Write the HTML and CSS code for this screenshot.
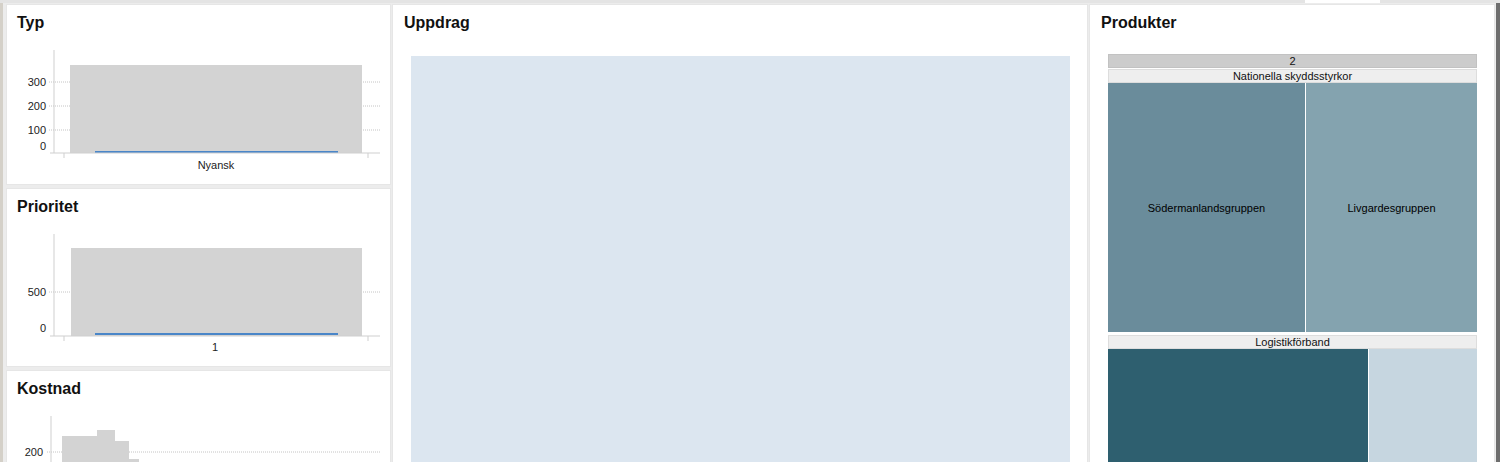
FILE: index.html
```html
<!DOCTYPE html>
<html lang="sv">
<head>
  <meta charset="UTF-8">
  <meta name="viewport" content="width=device-width, initial-scale=1">
  <title>Uppdrag – översikt</title>
  <link rel="stylesheet" href="styles.css">
</head>
<body>

  <div class="tabstrip"><span class="tab-active"></span></div>

  <div class="app">
    <!-- Left column: small charts -->
    <div class="col-left">
      <section class="panel panel-typ">
        <h2 class="panel-title">Typ</h2>
        <svg class="chart" width="383" height="150" viewBox="0 0 383 150">
          <line class="grid" x1="42" y1="49" x2="373" y2="49"/>
          <line class="grid" x1="42" y1="73" x2="373" y2="73"/>
          <line class="grid" x1="42" y1="97" x2="373" y2="97"/>
          <rect class="bar" x="63" y="32" width="292" height="88"/>
          <line class="value" x1="88" y1="119" x2="331" y2="119"/>
          <line class="axis" x1="47" y1="17" x2="47" y2="120"/>
          <line class="axis" x1="43" y1="120" x2="373" y2="120"/>
          <line class="axis" x1="57" y1="120" x2="57" y2="125"/>
          <line class="axis" x1="361" y1="120" x2="361" y2="125"/>
          <text class="tick-y" x="39" y="53">300</text>
          <text class="tick-y" x="39" y="77">200</text>
          <text class="tick-y" x="39" y="101">100</text>
          <text class="tick-y" x="39" y="117">0</text>
          <text class="tick-x" x="209" y="136">Nyansk</text>
        </svg>
      </section>

      <section class="panel panel-prio">
        <h2 class="panel-title">Prioritet</h2>
        <svg class="chart" width="383" height="148" viewBox="0 0 383 148">
          <line class="grid" x1="42" y1="75" x2="373" y2="75"/>
          <rect class="bar" x="64" y="31" width="291" height="88"/>
          <line class="value" x1="88" y1="117" x2="331" y2="117"/>
          <line class="axis" x1="47" y1="17" x2="47" y2="119"/>
          <line class="axis" x1="43" y1="119" x2="373" y2="119"/>
          <line class="axis" x1="57" y1="119" x2="57" y2="124"/>
          <line class="axis" x1="361" y1="119" x2="361" y2="124"/>
          <text class="tick-y" x="39" y="79">500</text>
          <text class="tick-y" x="39" y="115">0</text>
          <text class="tick-x" x="208" y="134">1</text>
        </svg>
      </section>

      <section class="panel panel-kost">
        <h2 class="panel-title">Kostnad</h2>
        <svg class="chart" width="383" height="150" viewBox="0 0 383 150">
          <line class="grid" x1="40" y1="53" x2="373" y2="53"/>
          <rect class="bar" x="55" y="37" width="35" height="110"/>
          <rect class="bar" x="90" y="31" width="18" height="116"/>
          <rect class="bar" x="108" y="42" width="14" height="105"/>
          <rect class="bar" x="122" y="60" width="10" height="87"/>
          <line class="axis" x1="44" y1="17" x2="44" y2="150"/>
          <text class="tick-y" x="36" y="57">200</text>
        </svg>
      </section>
    </div>

    <!-- Middle: assignments map area -->
    <section class="panel panel-main">
      <h2 class="panel-title">Uppdrag</h2>
      <div class="map-area"></div>
    </section>

    <!-- Right: product treemap -->
    <section class="panel panel-products">
      <h2 class="panel-title">Produkter</h2>
      <div class="treemap">
        <div class="tm-root">2</div>
        <div class="tm-group">
          <div class="tm-head">Nationella skyddsstyrkor</div>
          <div class="tm-row tm-row-tall">
            <div class="tm-tile tile-a">Södermanlandsgruppen</div>
            <div class="tm-tile tile-b">Livgardesgruppen</div>
          </div>
        </div>
        <div class="tm-group">
          <div class="tm-head">Logistikförband</div>
          <div class="tm-row tm-row-low">
            <div class="tm-tile tile-c"></div>
            <div class="tm-tile tile-d"></div>
          </div>
        </div>
      </div>
    </section>
  </div>

</body>
</html>
```

FILE: styles.css
```css
* { box-sizing: border-box; }
html, body {
  margin: 0;
  height: 100%;
  overflow: hidden;
}
body {
  font-family: "Liberation Sans", Arial, sans-serif;
  background: #ececec;
  color: #000;
}
.tabstrip {
  height: 3px;
  background: #e4e4e4;
  position: relative;
}
.tab-active {
  position: absolute;
  left: 1305px;
  top: 0;
  width: 75px;
  height: 3px;
  background: #fff;
}
.app {
  display: grid;
  grid-template-columns: 385px 696px 1fr;
  gap: 1px;
  padding: 1px 1px 0 3px;
  border-left: 3px solid #d4d0c8;
  border-right: 4px solid #6e6e6e;
  background: #ececec;
  height: 800px;
}
.col-left {
  display: flex;
  flex-direction: column;
  gap: 3px;
}
.panel {
  background: #fff;
  border: 1px solid #e6e6e6;
}
.panel-title {
  margin: 0;
  padding: 8px 0 0 10px;
  font-size: 16px;
  line-height: 20px;
  font-weight: bold;
  color: #111;
}
.panel-main .panel-title,
.panel-products .panel-title { padding-left: 11px; }
.panel-typ { height: 181px; }
.panel-prio { height: 179px; }
.panel-kost { flex: 1; }

/* charts */
.chart { display: block; }
.chart .bar { fill: #d3d3d3; }
.chart .axis { stroke: #cfcfcf; stroke-width: 1; }
.chart .grid { stroke: #c4c4c4; stroke-width: 1; stroke-dasharray: 1 1; }
.chart .value { stroke: #4a86c8; stroke-width: 2; }
.chart text {
  font-family: "Liberation Sans", Arial, sans-serif;
  font-size: 11px;
  fill: #222;
}
.chart .tick-y { text-anchor: end; }
.chart .tick-x { text-anchor: middle; }

/* middle */
.map-area {
  margin: 23px 17px 0 18px;
  height: 700px;
  background: #dce6f0;
}

/* treemap */
.treemap {
  margin: 21px 17px 0 18px;
  display: flex;
  flex-direction: column;
  font-size: 11px;
  color: #111;
}
.tm-root {
  height: 14px;
  line-height: 13px;
  text-align: center;
  background: #cccccc;
  border: 1px solid #c2c2c2;
}
.tm-group {
  margin-top: 1px;
  display: flex;
  flex-direction: column;
}
.tm-group + .tm-group { margin-top: 3px; }
.tm-head {
  height: 14px;
  line-height: 12px;
  text-align: center;
  background: #eeeeee;
  border: 1px solid #dddddd;
}
.tm-row {
  display: flex;
  gap: 1px;
}
.tm-row-tall { height: 249px; }
.tm-row-low { height: 300px; }
.tm-tile {
  display: flex;
  align-items: center;
  justify-content: center;
  color: #000;
}
.tile-a { width: 197px; background: #6a8c9b; }
.tile-b { flex: 1; background: #84a3af; }
.tile-c { width: 260px; background: #2e5f6f; }
.tile-d { flex: 1; background: #c6d6e0; }
```
